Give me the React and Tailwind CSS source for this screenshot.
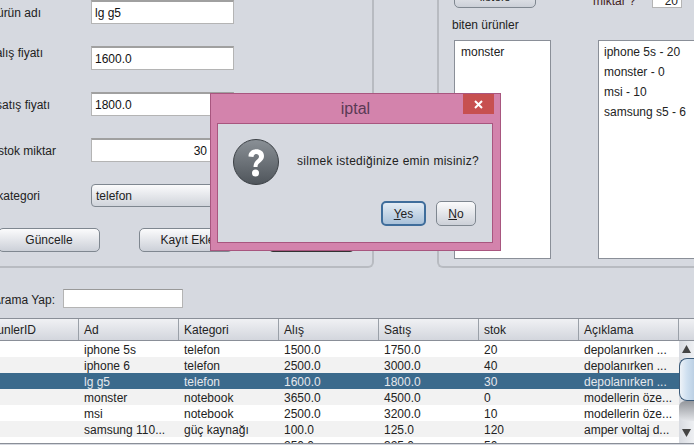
const rows = [
  ["iphone 5s", "telefon", "1500.0", "1750.0", "20", "depolanırken ..."],
  ["iphone 6", "telefon", "2500.0", "3000.0", "40", "depolanırken ..."],
  ["lg g5", "telefon", "1600.0", "1800.0", "30", "depolanırken ..."],
  ["monster", "notebook", "3650.0", "4500.0", "0", "modellerin öze..."],
  ["msi", "notebook", "2500.0", "3200.0", "10", "modellerin öze..."],
  ["samsung 110...", "güç kaynağı", "100.0", "125.0", "120", "amper voltaj d..."],
  ["", "", "250.0", "325.0", "50", ""],
];
const heads = ["Ad", "Kategori", "Alış", "Satış", "stok", "Açıklama"];
const input = "h-[24px] w-[143px] bg-white border border-[#b4b4b4] border-t-2 border-t-[#a0a0a0] px-[3px] text-[12px] leading-[22px] text-[#111]";
const btn = "h-[24px] rounded-[5px] border border-[#7f8790] bg-gradient-to-b from-[#fbfbfc] to-[#ccd0d8] text-[12px] text-[#222] flex items-center justify-center";

function Field({ label, value, right, mt, labelClass }) {
  return (
    <div className={`flex items-center ${mt || ""}`}>
      <div className={`flex w-[91px] justify-end overflow-hidden whitespace-nowrap text-[12px] leading-[14px] text-[#222] ${labelClass}`}>
        <span>{label}</span>
      </div>
      <div className={`${input} ${right ? "pr-[26px] text-right" : ""}`}>{value}</div>
    </div>
  );
}

export default function App() {
  return (
    <div className="relative h-[445px] w-[694px] overflow-hidden bg-[#d6d9e0] text-[#222]" style={{ fontFamily: '"Liberation Sans", Arial, sans-serif' }}>
      <div className="flex h-[268px]">
        <div className="h-[268px] w-[374px] shrink-0 rounded-br-[6px] border-r-2 border-b-2 border-[#b8bbc1]">
          <Field label="ürün adı" value="lg g5" labelClass="pr-[50px] translate-y-[1px]" />
          <Field label="alış fiyatı" value="1600.0" mt="mt-[22px]" labelClass="pr-[48px] -translate-y-[5px]" />
          <Field label="satış fiyatı" value="1800.0" mt="mt-[22px]" labelClass="pr-[41px] translate-y-[1px]" />
          <Field label="stok miktar" value="30" right mt="mt-[22px]" labelClass="pr-[35px] translate-y-[1px]" />
          <div className="mt-[22px] flex items-center">
            <div className="flex w-[91px] justify-end overflow-hidden whitespace-nowrap pr-[51px] text-[12px]">kategori</div>
            <div className="flex h-[23px] w-[143px] items-center rounded-[4px] border border-[#7f8790] bg-gradient-to-b from-[#fbfbfc] to-[#d0d4db] px-[4px] text-[12px]">telefon</div>
          </div>
          <div className="mt-[21px] flex">
            <div className={`${btn} -ml-[2px] w-[102px] shrink-0`}>Güncelle</div>
            <div className={`${btn} ml-[39px] w-[94px] shrink-0 pl-[3px]`}>Kayıt Ekle</div>
            <div className={`${btn} ml-[35px] w-[87px] shrink-0 border-[#333]`}>Sil</div>
          </div>
        </div>
        <div className="ml-[63px] h-[268px] flex-1 rounded-bl-[6px] border-b-2 border-l-2 border-[#b8bbc1]">
          <div className="flex h-[9px] overflow-visible">
            <div className={`${btn} ml-[15px] -mt-[16px] w-[82px] shrink-0 pt-[2px]`}>listele</div>
            <div className="ml-[57px] -mt-[6px] w-[59px] shrink-0 text-[12px] leading-[14px] text-[#422]">miktar ?</div>
            <div className="-mt-[11px] h-[19px] w-[30px] shrink-0 overflow-hidden border border-[#b4b4b4] bg-white px-[3px] text-right text-[12px] leading-[22px]">20</div>
          </div>
          <div className="ml-[13px] mt-[9px] text-[12px] leading-[14px]">biten ürünler</div>
          <div className="mt-[8px] flex">
            <div className="ml-[15px] h-[219px] w-[97px] shrink-0 border border-[#8a8f98] bg-white px-[6px] pt-[4px] text-[12px] leading-[14px]">monster</div>
            <div className="ml-[47px] h-[219px] flex-1 border border-r-0 border-[#8a8f98] bg-white px-[5px] pt-[1px] text-[12px] leading-[20px]">
              <div>iphone 5s - 20</div>
              <div>monster - 0</div>
              <div>msi - 10</div>
              <div>samsung s5 - 6</div>
            </div>
          </div>
        </div>
      </div>

      <div className="mt-[21px] flex h-[19px] items-center whitespace-nowrap text-[12px]">
        <div className="flex w-[63px] justify-end overflow-hidden pr-[8px] pt-[2px]"><span>Arama Yap:</span></div>
        <div className="h-[19px] w-[120px] border border-[#b4b4b4] border-t-[#999] bg-white" />
      </div>

      <div className="mt-[10px]">
        <div className="flex h-[23px] border-y border-[#8a8f98] bg-gradient-to-b from-[#f0f1f4] to-[#d3d6dd] text-[12px]">
          <div className="flex w-[79px] shrink-0 items-center justify-end overflow-hidden whitespace-nowrap border-r border-[#9aa0a8] pr-[42px]">UrunlerID</div>
          {heads.map((h) => (
            <div key={h} className="flex w-[100px] shrink-0 items-center border-r border-[#9aa0a8] pl-[5px]">{h}</div>
          ))}
          <div className="flex-1" />
        </div>
        <div className="flex border-b border-[#8a8f98]">
          <div className="h-[102px] w-[679px] shrink-0 overflow-hidden bg-white">
            {rows.map((r, i) => (
              <div key={i} className={`flex h-[16px] text-[12px] leading-[18px] ${i === 2 ? "bg-[#3b6a8c] text-[#e6e8ec]" : i % 2 ? "bg-[#f2f2f2]" : "bg-white"}`}>
                <div className="w-[79px] shrink-0" />
                {r.map((c, j) => (
                  <div key={j} className="w-[100px] shrink-0 whitespace-nowrap pl-[5px]">{c}</div>
                ))}
              </div>
            ))}
          </div>
          <div className="flex h-[102px] flex-1 flex-col bg-gradient-to-r from-[#d8dbe1] to-[#eef0f3]">
            <div className="flex h-[16px] shrink-0 items-center justify-center">
              <svg width="9" height="8" viewBox="0 0 9 8"><path d="M4.5 0 L9 8 L0 8 Z" fill="#444" /></svg>
            </div>
            <div className="mt-px h-[43px] w-[15px] shrink-0 rounded-l-[8px] border border-r-0 border-[#3b5a78] bg-gradient-to-r from-[#eef3f8] via-[#cfe0f0] to-[#bcd0e4]" />
            <div className="h-[20px] w-[15px] shrink-0 rounded-l-[6px] bg-gradient-to-b from-[#94979c] to-[#e4e6ea]" />
            <div className="flex-1" />
            <div className="mb-[2px] flex h-[16px] shrink-0 items-center justify-center">
              <svg width="9" height="8" viewBox="0 0 9 8"><path d="M0 0 L9 0 L4.5 8 Z" fill="#444" /></svg>
            </div>
          </div>
        </div>
      </div>

      <div className="absolute left-[210px] top-[93px] h-[158px] w-[291px] border border-[#a8567f] bg-[#d383ac]">
        <div className="relative h-[29px]">
          <div className="pt-[5px] text-center text-[16px] leading-[20px] text-[#5a3a55]">iptal</div>
          <div className="absolute right-[6px] top-0 flex h-[20px] w-[31px] items-center justify-center bg-[#c75050]">
            <svg width="9" height="9" viewBox="0 0 9 9"><path d="M1 1 L8 8 M8 1 L1 8" stroke="#fff" strokeWidth="2" /></svg>
          </div>
        </div>
        <div className="ml-[6px] flex h-[120px] w-[276px] flex-col border border-[#a8567f] bg-[#d6d9e0]">
          <div className="flex flex-1 items-start">
            <svg className="ml-[15px] mt-[15px]" width="46" height="46" viewBox="0 0 46 46">
              <defs>
                <linearGradient id="q" x1="0" y1="0" x2="0" y2="1">
                  <stop offset="0" stopColor="#8a9096" />
                  <stop offset="1" stopColor="#4f555b" />
                </linearGradient>
              </defs>
              <circle cx="23" cy="23" r="22.5" fill="url(#q)" stroke="#3c4146" />
              <path d="M15.5 17.5 C15.5 8 31 8 31 17 C31 23 24.5 23 24.5 28 L20.5 28 C20.5 21 26 21 26 17.5 C26 14 20.5 14 20.5 18 Z" fill="#fff" />
              <circle cx="22.5" cy="34" r="3.5" fill="#fff" />
            </svg>
            <div className="ml-[18px] mt-[30px] whitespace-nowrap text-[12px] leading-[14px] tracking-[0.28px]">silmek istediğinize emin misiniz?</div>
          </div>
          <div className="mb-[16px] flex justify-end">
            <div className="flex h-[25px] w-[45px] items-center justify-center rounded-[5px] border-2 border-[#3f6d9b] bg-gradient-to-b from-[#e4ecf4] to-[#a9c1d9] text-[12px]"><span><span className="underline">Y</span>es</span></div>
            <div className="ml-[10px] mr-[16px] flex h-[25px] w-[40px] items-center justify-center rounded-[5px] border border-[#7f8790] bg-gradient-to-b from-[#fbfbfc] to-[#ccd0d8] text-[12px]"><span><span className="underline">N</span>o</span></div>
          </div>
        </div>
      </div>
    </div>
  );
}
